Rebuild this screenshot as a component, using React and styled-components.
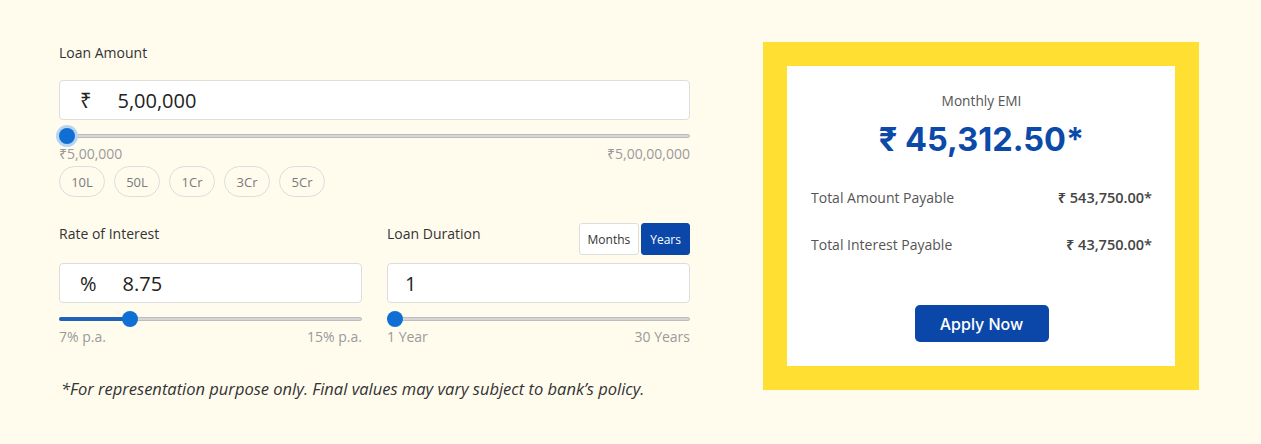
import React from 'react';
import styled, { createGlobalStyle } from 'styled-components';

const GlobalStyle = createGlobalStyle`
  html, body {
    margin: 0;
    padding: 0;
    background: #fffcee;
  }
  body {
    font-family: "Open Sans", "Noto Sans", sans-serif;
    color: #333;
  }
`;

const chips = ['10L', '50L', '1Cr', '3Cr', '5Cr'];

const App = () => {
  return (
    <React.Fragment>
      <GlobalStyle />
      <Page>
        <Calculator>
          {/* loan amount */}
          <Label>Loan Amount</Label>
          <InputBox>
            <Prefix>₹</Prefix>
            <Value>5,00,000</Value>
          </InputBox>
          <Slider percent={0} halo />
          <RangeRow>
            <span>₹5,00,000</span>
            <span>₹5,00,00,000</span>
          </RangeRow>
          <ChipRow>
            {chips.map((c) => (
              <Chip key={c}>{c}</Chip>
            ))}
          </ChipRow>

          <TwoCols>
            <Field>
              <FieldHead>
                <Label>Rate of Interest</Label>
              </FieldHead>
              <InputBox>
                <Prefix>%</Prefix>
                <Value>8.75</Value>
              </InputBox>
              <Slider percent={21.9} filled />
              <RangeRow>
                <span>7% p.a.</span>
                <span>15% p.a.</span>
              </RangeRow>
            </Field>
            <Field>
              <FieldHead>
                <Label>Loan Duration</Label>
                <Toggle>
                  <ToggleBtn>Months</ToggleBtn>
                  <ToggleBtn active>Years</ToggleBtn>
                </Toggle>
              </FieldHead>
              <InputBox plain>
                <Value>1</Value>
              </InputBox>
              <Slider percent={0} />
              <RangeRow>
                <span>1 Year</span>
                <span>30 Years</span>
              </RangeRow>
            </Field>
          </TwoCols>

          <Note>*For representation purpose only. Final values may vary subject to bank’s policy.</Note>
        </Calculator>

        <ResultFrame>
          <ResultCard>
            <EmiLabel>Monthly EMI</EmiLabel>
            <EmiValue>₹ 45,312.50*</EmiValue>
            <ResultRow first>
              <span>Total Amount Payable</span>
              <b>₹ 543,750.00*</b>
            </ResultRow>
            <ResultRow>
              <span>Total Interest Payable</span>
              <b>₹ 43,750.00*</b>
            </ResultRow>
            <ApplyBtn>Apply Now</ApplyBtn>
          </ResultCard>
        </ResultFrame>
      </Page>
    </React.Fragment>
  );
};

// thumb is 16px, so its left edge runs from 0 to (track width - 16px)
const Slider = ({ percent, filled, halo }) => {
  const pos = `calc((100% - 16px) * ${percent / 100})`;
  return (
    <SliderWrap>
      <Track>
        {filled && <Fill style={{ width: `calc(${pos} + 8px)` }} />}
      </Track>
      <Thumb halo={halo} style={{ left: pos }} />
    </SliderWrap>
  );
};

export default App;

const Page = styled.div`
  display: flex;
  align-items: flex-start;
  gap: 73px;
  padding: 42px 0 0 59px;
  height: 444px;
  box-sizing: border-box;
`;

const Calculator = styled.div`
  width: 631px;
  display: flex;
  flex-direction: column;
`;

const Label = styled.div`
  font-size: 14px;
  line-height: 20px;
  padding-top: 1px;
  color: #333;
  margin-bottom: 17px;
`;

const InputBox = styled.div`
  height: 40px;
  box-sizing: border-box;
  background: #fff;
  border: 1px solid #ddd;
  border-radius: 4px;
  display: flex;
  align-items: center;
  padding-left: ${(p) => (p.plain ? '17px' : '20px')};
`;

const Prefix = styled.span`
  margin-right: 26px;
  font-size: 20px;
  color: #222;
`;

const Value = styled.span`
  font-size: 20px;
  color: #222;
`;

const SliderWrap = styled.div`
  position: relative;
  height: 16px;
  margin: 8px 0 0;
`;

const Track = styled.div`
  position: absolute;
  left: 0;
  right: 0;
  top: 6px;
  height: 4px;
  box-sizing: border-box;
  background: #d6d6d6;
  border: 1px solid #bdbdbd;
  border-radius: 2px;
`;

const Fill = styled.div`
  height: 4px;
  margin: -1px 0 0 -1px;
  background: #2062b8;
  border-radius: 2px;
`;

const Thumb = styled.div`
  position: absolute;
  top: 0;
  width: 16px;
  height: 16px;
  border-radius: 50%;
  background: #0f6fd4;
  box-shadow: ${(p) => (p.halo ? '0 0 0 3px #b8d4f0' : 'none')};
`;

const RangeRow = styled.div`
  display: flex;
  justify-content: space-between;
  font-size: 14px;
  line-height: 16px;
  color: #9a9a9a;
  margin-top: 2px;
`;

const ChipRow = styled.div`
  display: flex;
  gap: 9px;
  margin-top: 4px;
`;

const Chip = styled.div`
  width: 46px;
  height: 31px;
  box-sizing: border-box;
  border: 1px solid #ddd;
  border-radius: 16px;
  display: flex;
  align-items: center;
  justify-content: center;
  font-size: 13px;
  color: #7a7a7a;
`;

const TwoCols = styled.div`
  display: grid;
  grid-template-columns: 303px 303px;
  gap: 25px;
  margin-top: 26px;
`;

const Field = styled.div`
  display: flex;
  flex-direction: column;
`;

const FieldHead = styled.div`
  height: 32px;
  margin-bottom: 8px;
  display: flex;
  justify-content: space-between;
  align-items: flex-start;

  ${Label} {
    margin: 0;
  }
`;

const Toggle = styled.div`
  display: flex;
  gap: 2px;
`;

const ToggleBtn = styled.div`
  height: 32px;
  box-sizing: border-box;
  padding: 0 8px;
  display: flex;
  align-items: center;
  font-size: 12px;
  border-radius: 3px;
  border: 1px solid ${(p) => (p.active ? '#0a47a9' : '#ddd')};
  background: ${(p) => (p.active ? '#0a47a9' : '#fff')};
  color: ${(p) => (p.active ? '#fff' : '#333')};
`;

const Note = styled.div`
  margin-top: 34px;
  padding-left: 2px;
  font-size: 16.5px;
  line-height: 20px;
  font-style: italic;
  color: #333;
`;

const ResultFrame = styled.div`
  width: 436px;
  box-sizing: border-box;
  padding: 24px;
  background: #fedf32;
`;

const ResultCard = styled.div`
  height: 300px;
  box-sizing: border-box;
  background: #fff;
  padding: 26px 23px 0 24px;
  display: flex;
  flex-direction: column;
  align-items: stretch;
`;

const EmiLabel = styled.div`
  text-align: center;
  font-size: 13.7px;
  line-height: 18px;
  color: #555;
`;

const EmiValue = styled.div`
  margin-top: 10px;
  text-align: center;
  font-family: Inter, "Noto Sans", sans-serif;
  font-weight: 700;
  font-size: 32.5px;
  line-height: 40px;
  color: #0b4aa8;
`;

const ResultRow = styled.div`
  margin-top: ${(p) => (p.first ? '28px' : '27px')};
  display: flex;
  justify-content: space-between;
  font-size: 14px;
  line-height: 20px;
  color: #555;

  b {
    font-size: 14.5px;
    font-weight: 600;
    color: #444;
  }
`;

const ApplyBtn = styled.div`
  align-self: center;
  margin-top: 50px;
  width: 134px;
  height: 37px;
  border-radius: 5px;
  background: #0a47a9;
  color: #fff;
  display: flex;
  align-items: center;
  justify-content: center;
  font-family: Inter, "Noto Sans", sans-serif;
  font-size: 16px;
  font-weight: 500;
`;
